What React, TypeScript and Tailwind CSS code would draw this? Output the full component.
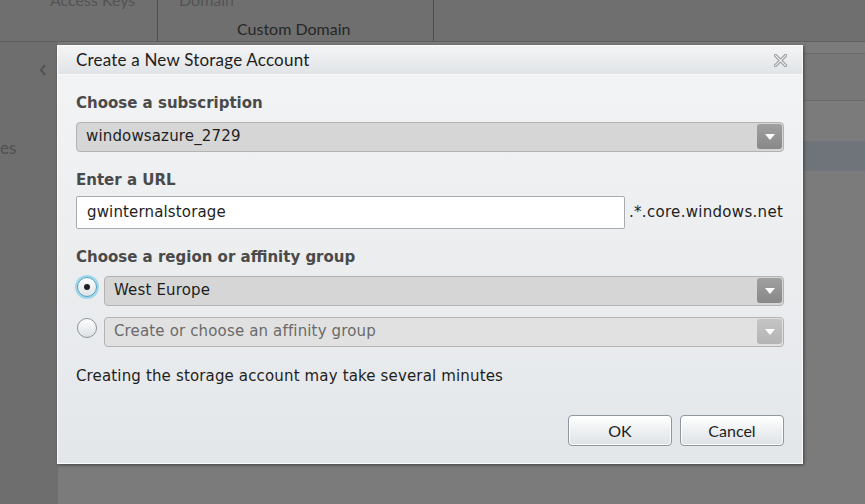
import React from 'react';

const ui = { fontFamily: '"DejaVu Sans", Verdana, sans-serif' };
const title = { fontFamily: 'Lato, "Open Sans", sans-serif' };

const Arrow = ({ light }: { light?: boolean }) => (
  <div
    className={`flex h-[25px] w-[25px] items-center justify-center rounded-[3px] ${
      light ? 'bg-gradient-to-b from-[#c4c4c4] to-[#b4b4b4]' : 'bg-gradient-to-b from-[#a0a0a0] to-[#888888]'
    }`}
  >
    <svg width="10" height="6" viewBox="0 0 10 6">
      <path d="M0 0 H10 L5 6 Z" fill="#ffffff" />
    </svg>
  </div>
);

const Select = ({ value, disabled }: { value: string; disabled?: boolean }) => (
  <div
    className={`flex h-[30px] flex-1 items-center justify-between rounded-[4px] border border-[#b3b3b3] pl-[9px] pr-[1px] ${
      disabled ? 'bg-[#e1e1e1] text-[#6a6a6a]' : 'bg-[#d6d6d6] text-[#1e1e1e]'
    }`}
  >
    <span className="text-[15px] tracking-[0.15px]">{value}</span>
    <Arrow light={disabled} />
  </div>
);

const Radio = ({ checked }: { checked?: boolean }) => (
  <div
    className={`flex h-[20px] w-[20px] items-center justify-center rounded-full border ${
      checked
        ? 'border-[#4a9fc2] bg-gradient-to-b from-[#ffffff] to-[#dfe3e6] shadow-[0_0_0_2px_#9fd6ea]'
        : 'border-[#8a939a] bg-gradient-to-b from-[#ffffff] to-[#dde1e5]'
    }`}
  >
    {checked && <div className="h-[6px] w-[6px] rounded-full bg-[#222]" />}
  </div>
);

const Button = ({ label }: { label: string }) => (
  <button className="h-[31px] w-[104px] rounded-[4px] border border-[#8d959d] bg-gradient-to-b from-[#ffffff] to-[#dde2e6] text-[16px] text-[#1e1e1e] shadow-[inset_0_0_0_1px_#ffffff]" style={title}>
    {label}
  </button>
);

export default function App() {
  return (
    <div className="relative h-[504px] w-[865px] overflow-hidden bg-[#7b7b7b]" style={ui}>
      {/* greyed page behind the modal */}
      <div className="flex h-[42px] border-b border-[#5f5f5f] bg-[#6f6f6f]" style={title}>
        <div className="relative w-[158px] border-r border-[#4e4e4e]">
          <span className="absolute left-[50px] top-[-12px] text-[16px] text-[#545454]">Access Keys</span>
        </div>
        <div className="relative w-[276px] border-r border-[#4e4e4e]">
          <span className="absolute left-[21px] top-[-12px] text-[16px] text-[#545454]">Domain</span>
          <span className="absolute left-[79px] top-[17px] text-[16px] text-[#262626]">Custom Domain</span>
        </div>
      </div>
      <div className="flex h-[462px]">
        <div className="relative w-[58px] bg-[#6e6e6e]">
          <svg className="absolute left-[39px] top-[22px]" width="8" height="12" viewBox="0 0 8 12">
            <path d="M6 1 L2 6 L6 11" stroke="#505050" strokeWidth="2" fill="none" />
          </svg>
          <span className="absolute left-0 top-[93px] text-[17px] text-[#505050]" style={title}>es</span>
        </div>
        <div className="flex flex-1 flex-col">
          <div className="h-[11px]" />
          <div className="h-[48px] border-y border-[#6a6a6a] bg-[#777777]" />
          <div className="h-[40px]" />
          <div className="h-[30px] bg-[#6e7479]" />
        </div>
      </div>

      {/* modal */}
      <div className="absolute left-[57px] top-[45px] flex h-[419px] w-[746px] flex-col border border-[#fafbfc] shadow-[1px_1px_3px_rgba(0,0,0,0.45)]">
        <div className="flex h-[29px] items-center justify-between border-b border-[#f7f8f9] bg-gradient-to-b from-[#f3f4f5] to-[#e1e4e7] pl-[18px] pr-[15px]">
          <span className="text-[17px] tracking-[0.2px] text-[#1e1e1e]" style={title}>Create a New Storage Account</span>
          <svg width="13" height="13" viewBox="0 0 13 13">
            <path d="M1.5 1.5 L11.5 11.5 M11.5 1.5 L1.5 11.5" stroke="#9a9a9a" strokeWidth="3.2" strokeLinecap="square" />
            <path d="M1.5 1.5 L11.5 11.5 M11.5 1.5 L1.5 11.5" stroke="#eeeeee" strokeWidth="1.2" strokeLinecap="square" />
          </svg>
        </div>
        <div className="flex flex-1 flex-col bg-gradient-to-b from-[#f2f3f4] to-[#e4e7ea] pl-[18px] pr-[18px]">
          <div className="mt-[17px] text-[15px] font-bold text-[#4a4a4a]">Choose a subscription</div>
          <div className="mt-[7px] flex">
            <Select value="windowsazure_2729" />
          </div>
          <div className="mt-[17px] text-[15px] font-bold text-[#4a4a4a]">Enter a URL</div>
          <div className="mt-[5px] flex items-center">
            <div className="flex h-[33px] w-[549px] items-center rounded-[2px] border border-[#a8acb0] bg-white pl-[10px] text-[15px] tracking-[0.15px] text-[#1e1e1e]">
              gwinternalstorage
            </div>
            <span className="ml-[4px] text-[15px] tracking-[0.3px] text-[#1e1e1e]">.*.core.windows.net</span>
          </div>
          <div className="mt-[17px] text-[15px] font-bold text-[#4a4a4a]">Choose a region or affinity group</div>
          <div className="mt-[7px] flex items-center gap-[7px] pl-[1px]">
            <div className="self-start pt-[1px]">
              <Radio checked />
            </div>
            <Select value="West Europe" />
          </div>
          <div className="mt-[11px] flex items-center gap-[7px] pl-[1px]">
            <div className="self-start pt-[1px]">
              <Radio />
            </div>
            <Select value="Create or choose an affinity group" disabled />
          </div>
          <div className="mt-[18px] text-[15px] tracking-[0.15px] text-[#1e1e1e]">Creating the storage account may take several minutes</div>
          <div className="mt-[28px] flex justify-end gap-[8px]">
            <Button label="OK" />
            <Button label="Cancel" />
          </div>
        </div>
      </div>
    </div>
  );
}
